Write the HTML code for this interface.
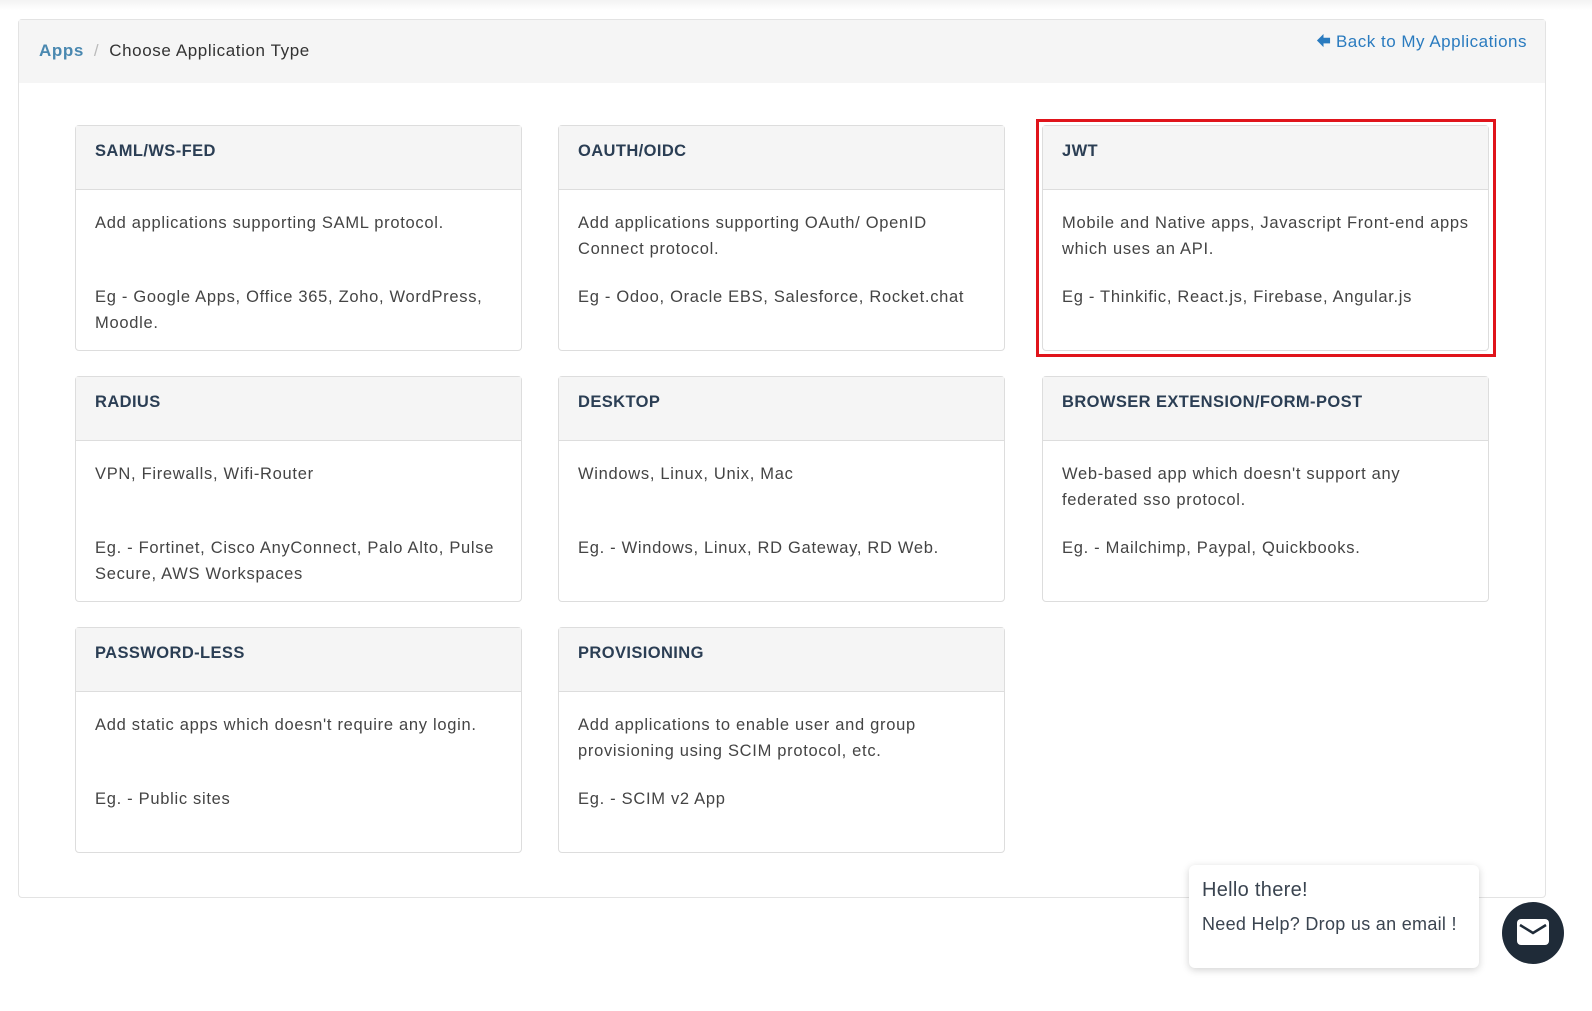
<!DOCTYPE html>
<html><head><style>
*{box-sizing:border-box;margin:0;padding:0}
body{width:1592px;height:1011px;background:#fff;font-family:"Liberation Sans",sans-serif;position:relative;overflow:hidden;color:#3a3a3a}
.topbar{position:absolute;left:0;top:0;width:1592px;height:10px;background:linear-gradient(#f3f3f3,#fff)}
.wrap{position:absolute;left:18px;top:19px;width:1528px;height:879px;border:1px solid #e3e3e3;border-radius:4px}
.hdr{position:absolute;left:0;top:0;right:0;height:63px;background:#f5f5f5}
.bc{position:absolute;left:20px;top:21px;font-size:17px;color:#333;letter-spacing:0.6px}
.bc a{color:#4a88b0;font-weight:bold;text-decoration:none}
.bc .s{color:#bbb;margin:0 10px}
.back{position:absolute;right:18px;top:12px;font-size:17px;color:#2a7bbf;letter-spacing:0.5px}
.card{position:absolute;width:447px;height:226px;border:1px solid #ddd;border-radius:4px;background:#fff}
.card .h{height:64px;background:#f5f5f5;border-bottom:1px solid #ddd;padding:16px 19px;font-weight:bold;font-size:16.5px;color:#2b3e54;letter-spacing:0.4px}
.card .b{padding:20px 19px;font-size:16.5px;line-height:26px;color:#444;letter-spacing:0.7px}
.card .b p{height:74px}
.red{position:absolute;left:1036px;top:119px;width:460px;height:238px;border:3px solid #e0141b}
.chat{position:absolute;left:1189px;top:865px;width:290px;height:103px;background:#fff;border-radius:6px;box-shadow:0 2px 8px rgba(0,0,0,.18);padding:14px 13px;color:#3a4450;letter-spacing:0.3px}
.chat .t{font-size:20px;margin-bottom:12px}
.chat .m{font-size:18px}
.btn{position:absolute;left:1502px;top:902px;width:62px;height:62px;border-radius:50%;background:#1f2b38}
</style></head><body>
<div class="topbar"></div>
<div class="wrap"><div class="hdr">
<div class="bc"><a>Apps</a><span class="s">/</span>Choose Application Type</div>
<div class="back"><svg width="15" height="15" viewBox="0 0 16 16" style="vertical-align:-1px"><path d="M8 1 L1 8 L8 15 L8 11 L15 11 L15 5 L8 5 Z" fill="#2a7bbf"/></svg> Back to My Applications</div>
</div></div>

<div class="card" style="left:75px;top:125px"><div class="h">SAML/WS-FED</div><div class="b"><p>Add applications supporting SAML protocol.</p>Eg - Google Apps, Office 365, Zoho, WordPress, Moodle.</div></div>
<div class="card" style="left:558px;top:125px"><div class="h">OAUTH/OIDC</div><div class="b"><p>Add applications supporting OAuth/ OpenID Connect protocol.</p>Eg - Odoo, Oracle EBS, Salesforce, Rocket.chat</div></div>
<div class="card" style="left:1042px;top:125px"><div class="h">JWT</div><div class="b"><p>Mobile and Native apps, Javascript Front-end apps which uses an API.</p>Eg - Thinkific, React.js, Firebase, Angular.js</div></div>
<div class="red"></div>

<div class="card" style="left:75px;top:376px"><div class="h">RADIUS</div><div class="b"><p>VPN, Firewalls, Wifi-Router</p>Eg. - Fortinet, Cisco AnyConnect, Palo Alto, Pulse Secure, AWS Workspaces</div></div>
<div class="card" style="left:558px;top:376px"><div class="h">DESKTOP</div><div class="b"><p>Windows, Linux, Unix, Mac</p>Eg. - Windows, Linux, RD Gateway, RD Web.</div></div>
<div class="card" style="left:1042px;top:376px"><div class="h">BROWSER EXTENSION/FORM-POST</div><div class="b"><p>Web-based app which doesn't support any federated sso protocol.</p>Eg. - Mailchimp, Paypal, Quickbooks.</div></div>

<div class="card" style="left:75px;top:627px"><div class="h">PASSWORD-LESS</div><div class="b"><p>Add static apps which doesn't require any login.</p>Eg. - Public sites</div></div>
<div class="card" style="left:558px;top:627px"><div class="h">PROVISIONING</div><div class="b"><p>Add applications to enable user and group provisioning using SCIM protocol, etc.</p>Eg. - SCIM v2 App</div></div>

<div class="chat"><div class="t">Hello there!</div><div class="m">Need Help? Drop us an email !</div></div>
<div class="btn"><svg width="62" height="62" viewBox="0 0 62 62"><rect x="15" y="17" width="32" height="26" rx="4" fill="#fff"/><path d="M18 23 L31 31 L44 23" stroke="#1f2b38" stroke-width="2.5" fill="none"/></svg></div>
</body></html>
